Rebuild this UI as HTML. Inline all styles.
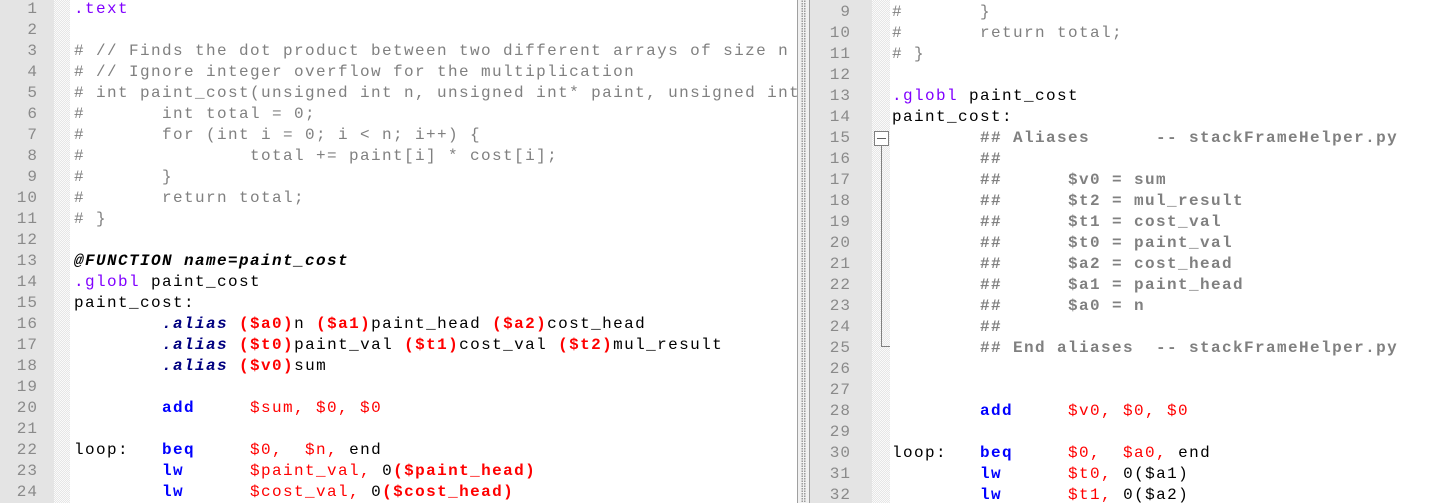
<!DOCTYPE html>
<html><head><meta charset="utf-8"><style>
*{margin:0;padding:0;box-sizing:border-box}
body{width:1450px;height:503px;overflow:hidden;background:#fff;position:relative;font-family:"Liberation Mono","Courier New",monospace;}
.pane{position:absolute;top:0;height:503px;overflow:hidden;background:#fff}
.gut{position:absolute;top:0;height:503px;background:#e4e4e4}
.fold{position:absolute;top:0;height:503px;background-color:#f4f4f4;background-image:repeating-conic-gradient(#e6e6e6 0 25%,#fafafa 0 50%);background-size:2px 2px}
pre{position:absolute;font-family:"Liberation Mono","Courier New",monospace;font-size:16px;letter-spacing:1.4px;line-height:21px;white-space:pre;color:#000}
.num{color:#8a8a8a;text-align:right}
.c{color:#808080}
.cb{color:#808080;font-weight:bold}
.d{color:#8000ff}
.k{color:#0000ff;font-weight:bold}
.r{color:#ff0000}
.rb{color:#ff0000;font-weight:bold}
.al{color:#000080;font-weight:bold;font-style:italic}
.fn{font-weight:bold;font-style:italic}
.div{position:absolute;left:797px;top:0;width:13px;height:503px;background:#f0f0f0;border-left:1px solid #a0a0a0;border-right:1px solid #a0a0a0}
.div i{position:absolute;left:3px;top:0;width:5px;height:503px;background-image:radial-gradient(#9a9a9a 40%,transparent 45%);background-size:2.5px 2.5px}
</style></head><body>
<div class="pane" style="left:0;width:797px">
 <div class="gut" style="left:0;width:54px"></div>
 <div class="fold" style="left:54px;width:16px"></div>
 <pre class="num" style="left:0;width:38px;top:-1px;letter-spacing:1px">1
2
3
4
5
6
7
8
9
10
11
12
13
14
15
16
17
18
19
20
21
22
23
24</pre>
<pre style="left:74px;top:-1px"><span class="d">.text</span>

<span class="c"># // Finds the dot product between two different arrays of size n</span>
<span class="c"># // Ignore integer overflow for the multiplication</span>
<span class="c"># int paint_cost(unsigned int n, unsigned int* paint, unsigned int* cost)</span>
<span class="c">#       int total = 0;</span>
<span class="c">#       for (int i = 0; i &lt; n; i++) {</span>
<span class="c">#               total += paint[i] * cost[i];</span>
<span class="c">#       }</span>
<span class="c">#       return total;</span>
<span class="c"># }</span>

<span class="fn">@FUNCTION name=paint_cost</span>
<span class="d">.globl</span> paint_cost
paint_cost:
        <span class="al">.alias</span> <span class="rb">($a0)</span>n <span class="rb">($a1)</span>paint_head <span class="rb">($a2)</span>cost_head
        <span class="al">.alias</span> <span class="rb">($t0)</span>paint_val <span class="rb">($t1)</span>cost_val <span class="rb">($t2)</span>mul_result
        <span class="al">.alias</span> <span class="rb">($v0)</span>sum

        <span class="k">add</span>     <span class="r">$sum, $0, $0</span>

loop:   <span class="k">beq</span>     <span class="r">$0,  $n,</span> end
        <span class="k">lw</span>      <span class="r">$paint_val,</span> 0<span class="rb">($paint_head)</span>
        <span class="k">lw</span>      <span class="r">$cost_val,</span> 0<span class="rb">($cost_head)</span></pre>
</div>
<div class="div"><i></i></div>
<div class="pane" style="left:810px;width:640px">
 <div class="gut" style="left:0;width:62px"></div>
 <div class="fold" style="left:62px;width:18px"></div>
 <pre class="num" style="left:0;width:41px;top:2px;letter-spacing:1px">9
10
11
12
13
14
15
16
17
18
19
20
21
22
23
24
25
26
27
28
29
30
31
32</pre>
 <div style="position:absolute;left:64px;top:131px;width:15px;height:15px;border:1px solid #808080;background:#fff"><div style="position:absolute;left:2px;top:6px;width:9px;height:1px;background:#606060"></div></div>
 <div style="position:absolute;left:71px;top:146px;width:1px;height:201px;background:#808080"></div>
 <div style="position:absolute;left:71px;top:346px;width:9px;height:1px;background:#808080"></div>
<pre style="left:82px;top:2px"><span class="c">#       }</span>
<span class="c">#       return total;</span>
<span class="c"># }</span>

<span class="d">.globl</span> paint_cost
paint_cost:
        <span class="cb">## Aliases      -- stackFrameHelper.py</span>
        <span class="cb">##</span>
        <span class="cb">##      $v0 = sum</span>
        <span class="cb">##      $t2 = mul_result</span>
        <span class="cb">##      $t1 = cost_val</span>
        <span class="cb">##      $t0 = paint_val</span>
        <span class="cb">##      $a2 = cost_head</span>
        <span class="cb">##      $a1 = paint_head</span>
        <span class="cb">##      $a0 = n</span>
        <span class="cb">##</span>
        <span class="cb">## End aliases  -- stackFrameHelper.py</span>


        <span class="k">add</span>     <span class="r">$v0, $0, $0</span>

loop:   <span class="k">beq</span>     <span class="r">$0,  $a0,</span> end
        <span class="k">lw</span>      <span class="r">$t0,</span> 0($a1)
        <span class="k">lw</span>      <span class="r">$t1,</span> 0($a2)</pre>
</div>
</body></html>
